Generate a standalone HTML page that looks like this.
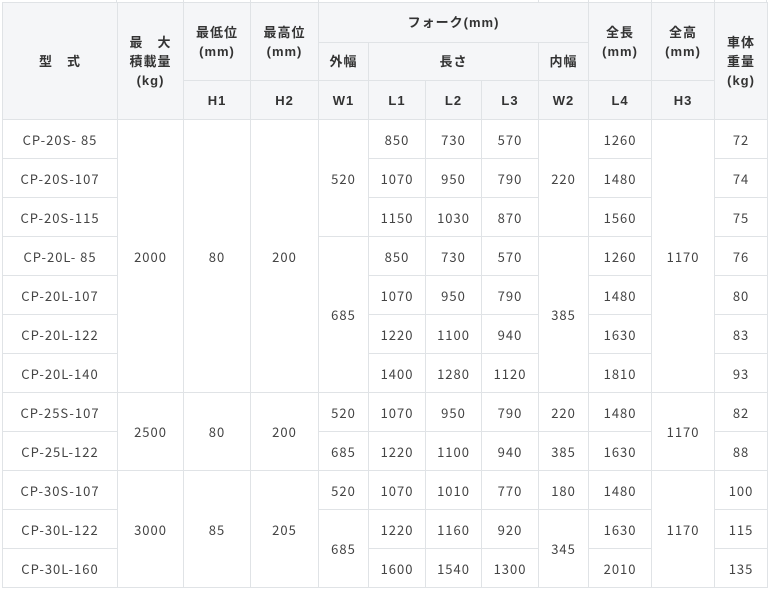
<!DOCTYPE html>
<html><head><meta charset="utf-8"><style>
html,body{margin:0;padding:0;background:#fff;width:771px;height:591px;overflow:hidden}
body{font-family:"Liberation Sans","Noto Sans CJK JP",sans-serif;color:#3a3a3a;position:relative}
.top{position:absolute;left:0;top:0;width:771px;height:3px}
.top i{position:absolute;top:0;width:1px;height:3px;background:#e0e3e6}
table{position:absolute;left:2px;top:2px;border-collapse:collapse;table-layout:fixed;width:765px}
td,th{border:1px solid #e0e3e6;text-align:center;vertical-align:middle;padding:0;font-size:13px;letter-spacing:1px}
th{background:#f5f6f8;font-weight:bold;line-height:19px;color:#333}
td{height:38px;font-family:"Noto Sans CJK JP","Liberation Sans",sans-serif;font-size:13px;color:#444}
</style></head><body>
<div class="top"><i style="left:116px"></i><i style="left:183px"></i><i style="left:250px"></i><i style="left:318px"></i><i style="left:538px"></i><i style="left:588px"></i><i style="left:651px"></i><i style="left:714px"></i><i style="left:766px"></i></div>
<table>
<colgroup><col style="width:115px"><col style="width:66px"><col style="width:67px"><col style="width:68px"><col style="width:50px"><col style="width:57px"><col style="width:56px"><col style="width:57px"><col style="width:50px"><col style="width:63px"><col style="width:63px"><col style="width:53px"></colgroup>
<tr style="height:40px"><th rowspan="3">型　式</th><th rowspan="3">最　大<br>積載量<br>(kg)</th><th rowspan="2">最低位<br>(mm)</th><th rowspan="2">最高位<br>(mm)</th><th colspan="5">フォーク(mm)</th><th rowspan="2">全長<br>(mm)</th><th rowspan="2">全高<br>(mm)</th><th rowspan="3">車体<br>重量<br>(kg)</th></tr>
<tr style="height:38px"><th>外幅</th><th colspan="3">長さ</th><th>内幅</th></tr>
<tr style="height:39px"><th>H1</th><th>H2</th><th>W1</th><th>L1</th><th>L2</th><th>L3</th><th>W2</th><th>L4</th><th>H3</th></tr>
<tr><td>CP-20S- 85</td><td rowspan="7">2000</td><td rowspan="7">80</td><td rowspan="7">200</td><td rowspan="3">520</td><td>850</td><td>730</td><td>570</td><td rowspan="3">220</td><td>1260</td><td rowspan="7">1170</td><td>72</td></tr>
<tr><td>CP-20S-107</td><td>1070</td><td>950</td><td>790</td><td>1480</td><td>74</td></tr>
<tr><td>CP-20S-115</td><td>1150</td><td>1030</td><td>870</td><td>1560</td><td>75</td></tr>
<tr><td>CP-20L- 85</td><td rowspan="4">685</td><td>850</td><td>730</td><td>570</td><td rowspan="4">385</td><td>1260</td><td>76</td></tr>
<tr><td>CP-20L-107</td><td>1070</td><td>950</td><td>790</td><td>1480</td><td>80</td></tr>
<tr><td>CP-20L-122</td><td>1220</td><td>1100</td><td>940</td><td>1630</td><td>83</td></tr>
<tr><td>CP-20L-140</td><td>1400</td><td>1280</td><td>1120</td><td>1810</td><td>93</td></tr>
<tr><td>CP-25S-107</td><td rowspan="2">2500</td><td rowspan="2">80</td><td rowspan="2">200</td><td>520</td><td>1070</td><td>950</td><td>790</td><td>220</td><td>1480</td><td rowspan="2">1170</td><td>82</td></tr>
<tr><td>CP-25L-122</td><td>685</td><td>1220</td><td>1100</td><td>940</td><td>385</td><td>1630</td><td>88</td></tr>
<tr><td>CP-30S-107</td><td rowspan="3">3000</td><td rowspan="3">85</td><td rowspan="3">205</td><td>520</td><td>1070</td><td>1010</td><td>770</td><td>180</td><td>1480</td><td rowspan="3">1170</td><td>100</td></tr>
<tr><td>CP-30L-122</td><td rowspan="2">685</td><td>1220</td><td>1160</td><td>920</td><td rowspan="2">345</td><td>1630</td><td>115</td></tr>
<tr><td>CP-30L-160</td><td>1600</td><td>1540</td><td>1300</td><td>2010</td><td>135</td></tr>
</table>
</body></html>
